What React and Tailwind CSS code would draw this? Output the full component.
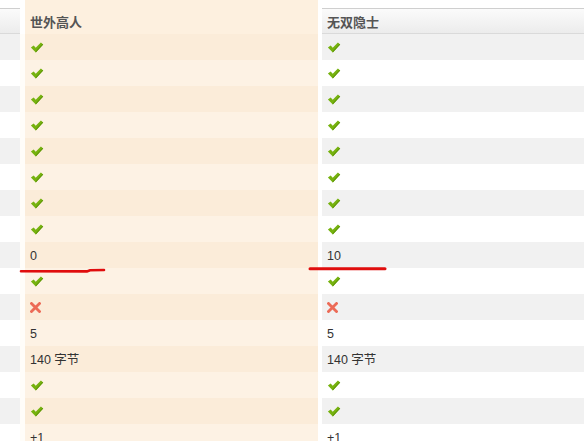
import React from "react";

const Check = () => (
  <svg width="14" height="11" viewBox="0 0 13 11" className="block">
    <path d="M0.4 5.6 L3.2 3.4 L5.2 5.8 L10.4 0.4 L12.7 2.5 L5.3 10.4 Z" fill="#76b20f" />
    <path d="M5.3 10.4 L12.7 2.5 L12 1.9 L5.2 9.2 Z" fill="#5c9407" />
  </svg>
);

const Cross = () => (
  <svg width="11" height="11" viewBox="0 0 11 11" className="block">
    <path d="M1.5 1.5 L9.5 9.5 M9.5 1.5 L1.5 9.5" stroke="#ec6b57" strokeWidth="2.8" strokeLinecap="square" />
  </svg>
);

const rows = [
  ["ok", "ok"], ["ok", "ok"], ["ok", "ok"], ["ok", "ok"],
  ["ok", "ok"], ["ok", "ok"], ["ok", "ok"], ["ok", "ok"],
  ["0", "10"],
  ["ok", "ok"],
  ["no", "no"],
  ["5", "5"],
  ["140 字节", "140 字节"],
  ["ok", "ok"], ["ok", "ok"],
  ["+1", "+1"],
];

function Cell({ v }) {
  if (v === "ok") return <Check />;
  if (v === "no") return <Cross />;
  return <span className="pt-[2px]">{v}</span>;
}

export default function App() {
  return (
    <div className="relative w-[584px] h-[441px] overflow-hidden bg-white text-[12.5px] text-[#333] font-['Liberation_Sans','Noto_Sans_CJK_SC',sans-serif]">
      {/* top strip */}
      <div className="flex h-[8px]">
        <div className="w-[20px]" />
        <div className="w-[5px]" />
        <div className="w-[293px] bg-[#fdf0df]" />
        <div className="w-[4px]" />
        <div className="flex-1" />
      </div>

      {/* header */}
      <div className="flex h-[26px] font-bold text-[13px] text-[#555] font-['Noto_Sans_CJK_SC',sans-serif]">
        <div className="w-[20px] border-t border-b border-t-[#cfcfcf] border-b-[#dadada] bg-gradient-to-b from-[#fbfbfb] to-[#ececec]" />
        <div className="w-[5px]" />
        <div className="w-[293px] bg-[#fdf0df] pl-[5px] pt-[2px] flex items-center">世外高人</div>
        <div className="w-[4px]" />
        <div className="flex-1 border-t border-b border-t-[#cfcfcf] border-b-[#dadada] bg-gradient-to-b from-[#fbfbfb] to-[#ececec] pl-[5px] pt-[1px] flex items-center">
          无双隐士
        </div>
      </div>

      {rows.map(([a, b], i) => {
        const odd = i % 2 === 0;
        return (
          <div key={i} className="flex h-[26px]">
            <div className={odd ? "w-[20px] bg-[#f1f1f1]" : "w-[20px] bg-white"} />
            <div className="w-[5px] bg-[#fffdf9]" />
            <div className={`w-[293px] pl-[5px] flex items-center ${odd ? "bg-[#fbecd9]" : "bg-[#fdf2e4]"}`}>
              <Cell v={a} />
            </div>
            <div className="w-[4px] bg-white" />
            <div className={`flex-1 pl-[5px] flex items-center ${odd ? "bg-[#f1f1f1]" : "bg-white"}`}>
              <Cell v={b} />
            </div>
          </div>
        );
      })}

      {/* hand-drawn marks */}
      <svg className="absolute left-0 top-0 pointer-events-none" width="584" height="441">
        <path d="M21 271.2 L87 271.4 L90 270.2 L104 270" stroke="#e00d0d" strokeWidth="2.6" fill="none" strokeLinecap="round" />
        <path d="M310 268.8 L385 268.8" stroke="#e00d0d" strokeWidth="3" fill="none" strokeLinecap="round" />
      </svg>
    </div>
  );
}
